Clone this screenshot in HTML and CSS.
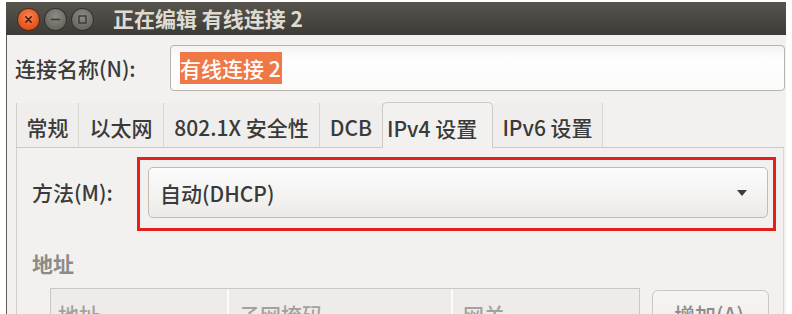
FILE: index.html
```html
<!DOCTYPE html>
<html lang="zh-CN">
<head>
<meta charset="utf-8">
<title>正在编辑 有线连接 2</title>
<link rel="stylesheet" href="styles.css">
</head>
<body>
<div class="window">
  <div class="titlebar">
    <div class="wbtns">
      <span class="wbtn close"><svg width="21" height="21" viewBox="0 0 21 21"><path d="M7.8 7.8 L13.2 13.2 M13.2 7.8 L7.8 13.2" stroke="#4a1e0e" stroke-width="1.6" stroke-linecap="round"/></svg></span>
      <span class="wbtn"><svg width="21" height="21" viewBox="0 0 21 21"><path d="M6.5 10.5 H14.5" stroke="#3a3935" stroke-width="1.6" stroke-linecap="round"/></svg></span>
      <span class="wbtn"><svg width="21" height="21" viewBox="0 0 21 21"><rect x="7" y="7" width="7" height="7" fill="none" stroke="#3a3935" stroke-width="1.4"/></svg></span>
    </div>
    <div class="title">正在编辑 有线连接 2</div>
  </div>
  <div class="content">
    <div class="namerow">
      <label class="namelabel">连接名称(N):</label>
      <div class="entry"><span class="sel">有线连接 2</span></div>
    </div>
    <div class="notebook">
      <div class="tabs">
        <div class="tab t-general">常规</div>
        <div class="tab t-eth">以太网</div>
        <div class="tab t-sec">802.1X 安全性</div>
        <div class="tab t-dcb">DCB</div>
        <div class="tab t-ipv4 active">IPv4 设置</div>
        <div class="tab t-ipv6">IPv6 设置</div>
        <div class="tabfill"></div>
      </div>
      <div class="page">
        <div class="methodrow">
          <label class="methodlabel">方法(M):</label>
          <div class="highlight">
            <div class="combo">
              <span class="combotext">自动(DHCP)</span>
              <span class="arrow"></span>
            </div>
          </div>
        </div>
        <div class="sectionhead">地址</div>
        <div class="addrrow">
          <div class="table">
            <div class="col c1">地址</div>
            <div class="col c2">子网掩码</div>
            <div class="col c3">网关</div>
          </div>
          <div class="addbtn">增加(A)</div>
        </div>
      </div>
    </div>
  </div>
</div>
</body>
</html>
```
FILE: styles.css
```css
html, body {
  margin: 0;
  padding: 0;
  height: 314px;
  overflow: hidden;
  background: #ffffff;
  font-family: "Noto Sans CJK SC", "Noto Sans", sans-serif;
  font-weight: 500;
  color: #3a3a3a;
}

.window {
  margin: 2px 0 0 6px;
  width: 780px;
  height: 312px;
  overflow: hidden;
}

.titlebar {
  height: 33px;
  display: flex;
  align-items: center;
  background: linear-gradient(#58554e, #3d3b37);
  padding-left: 12px;
}

.wbtns {
  display: flex;
  gap: 6px;
  margin-top: 1px;
}

.wbtn {
  width: 21px;
  height: 21px;
  border-radius: 50%;
  background: radial-gradient(circle at 50% 35%, #8f8b84, #6b6862 70%);
  box-shadow: 0 0 0 1px #34322e;
  display: block;
}

.wbtn svg {
  display: block;
}

.wbtn.close {
  background: radial-gradient(circle at 50% 35%, #f7834f, #e4521d 70%);
  box-shadow: 0 0 0 1px #5a2a14;
}

.title {
  margin-left: 20px;
  font-size: 21px;
  font-weight: bold;
  color: #dfdbd2;
  line-height: 33px;
}

.content {
  background: #f2f1f0;
  border-left: 1px solid #5e5a54;
  height: 279px;
  padding-top: 10px;
  box-sizing: border-box;
}

.namerow {
  display: flex;
  align-items: center;
  height: 46px;
}

.namelabel {
  width: 155px;
  padding-left: 8px;
  font-size: 21px;
  box-sizing: content-box;
}

.entry {
  flex: 1;
  height: 46px;
  box-sizing: border-box;
  border: 1px solid #b7b3ad;
  border-radius: 4px;
  background: linear-gradient(#f3f3f3, #fdfdfd 30%, #fbfbfb);
  display: flex;
  align-items: center;
  padding-left: 9px;
  margin-right: 1px;
}

.sel {
  background: #f07746;
  color: #ffffff;
  font-size: 21px;
  line-height: 32px;
  height: 32px;
  padding-right: 1px;
}

.notebook {
  margin-top: 11px;
  margin-left: 9px;
  margin-right: 2px;
}

.tabs {
  display: flex;
  align-items: flex-end;
  height: 46px;
}

.tab {
  height: 45px;
  box-sizing: border-box;
  font-size: 21px;
  line-height: 48px;
  text-align: center;
  border-right: 1px solid #d9d6d2;
  border-bottom: 1px solid #cdcac5;
  background: #efeeec;
  white-space: nowrap;
}

.t-general { width: 63px; border-left: 1px solid #d2cfca; }
.t-eth { width: 85px; }
.t-sec { width: 156px; }
.t-dcb { width: 63px; }
.t-ipv4 { width: 111px; }
.t-ipv6 { width: 110px; }

.tab.active {
  height: 46px;
  line-height: 50px;
  background: #f2f1f0;
  border: 1px solid #cdcac5;
  border-bottom-color: #f2f1f0;
  border-radius: 5px 5px 0 0;
  margin-left: -1px;
  text-align: left;
  padding-left: 4px;
}

.tabfill {
  flex: 1;
  height: 45px;
  box-sizing: border-box;
  border-bottom: 1px solid #cdcac5;
}

.page {
  border-left: 1px solid #d2cfca;
  border-right: 1px solid #dcdad6;
  height: 200px;
  padding-top: 9px;
  box-sizing: border-box;
}

.methodrow {
  display: flex;
  align-items: center;
}

.methodlabel {
  width: 105px;
  padding-left: 15px;
  font-size: 21px;
  padding-bottom: 4px;
}

.highlight {
  width: 639px;
  box-sizing: border-box;
  border: 3px solid #e3201b;
  padding: 7px 5px 10px 8px;
}

.combo {
  height: 51px;
  box-sizing: border-box;
  border: 1px solid #c9b9ab;
  border-radius: 5px;
  background: linear-gradient(#fcfcfc, #f3f2f1 60%, #ebeae8);
  display: flex;
  align-items: center;
  justify-content: space-between;
  padding: 0 20px 0 11px;
}

.combotext {
  font-size: 21px;
}

.arrow {
  width: 0;
  height: 0;
  border-left: 5px solid transparent;
  border-right: 5px solid transparent;
  border-top: 6px solid #3c3c3c;
}

.sectionhead {
  margin-top: 18px;
  padding-left: 15px;
  font-size: 21px;
  font-weight: bold;
  line-height: 28px;
  color: #8d8b88;
}

.addrrow {
  display: flex;
  align-items: flex-start;
  margin-top: 11px;
  margin-left: 33px;
}

.table {
  display: flex;
  border: 1px solid #cac7c3;
  height: 60px;
  box-sizing: border-box;
  background: #f2f1f0;
}

.col {
  height: 48px;
  box-sizing: border-box;
  background: #edecea;
  border-right: 2px solid #fbfbfa;
  font-size: 21px;
  color: #a3a19e;
  padding-top: 10px;
  line-height: 30px;
}

.c1 { width: 178px; padding-left: 7px; }
.c2 { width: 224px; padding-left: 10px; }
.c3 { width: 186px; padding-left: 10px; border-right: none; }

.addbtn {
  margin-left: 12px;
  margin-top: 2px;
  width: 117px;
  height: 44px;
  box-sizing: border-box;
  border: 1px solid #cbc8c4;
  border-radius: 6px;
  background: linear-gradient(#f6f5f4, #efeeec);
  font-size: 21px;
  color: #8e8c89;
  padding: 8px 0 0 21px;
  line-height: 30px;
}
```
